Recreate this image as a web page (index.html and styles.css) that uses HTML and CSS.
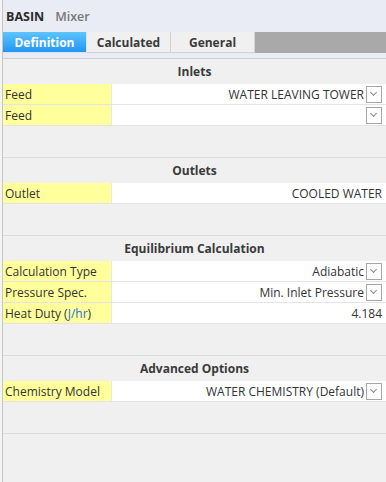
FILE: index.html
```html
<!DOCTYPE html>
<html lang="en">
<head>
    <meta charset="UTF-8">
    <meta name="viewport" content="width=device-width, initial-scale=1.0">
    <title>BASIN Mixer</title>
    <link rel="stylesheet" href="styles.css">
</head>
<body>
<div class="panel">
    <div class="title"><b>BASIN</b><span class="kind">Mixer</span></div>
    <div class="tabs">
        <div class="tab active">Definition</div>
        <div class="tab">Calculated</div>
        <div class="tab">General</div>
        <div class="tab-fill"></div>
    </div>
    <div class="tab-rule"></div>

    <div class="group">
        <div class="group-head">Inlets</div>
        <div class="row">
            <div class="label">Feed</div>
            <div class="value">WATER LEAVING TOWER<span class="drop"></span></div>
        </div>
        <div class="row">
            <div class="label">Feed</div>
            <div class="value"><span class="drop"></span></div>
        </div>
    </div>

    <div class="group">
        <div class="group-head">Outlets</div>
        <div class="row">
            <div class="label">Outlet</div>
            <div class="value">COOLED WATER</div>
        </div>
    </div>

    <div class="group">
        <div class="group-head">Equilibrium Calculation</div>
        <div class="row">
            <div class="label">Calculation Type</div>
            <div class="value">Adiabatic<span class="drop"></span></div>
        </div>
        <div class="row">
            <div class="label">Pressure Spec.</div>
            <div class="value">Min. Inlet Pressure<span class="drop"></span></div>
        </div>
        <div class="row">
            <div class="label">Heat Duty (<span class="unit">J/hr</span>)</div>
            <div class="value">4.184</div>
        </div>
    </div>

    <div class="group">
        <div class="group-head">Advanced Options</div>
        <div class="row">
            <div class="label">Chemistry Model</div>
            <div class="value">WATER CHEMISTRY (Default)<span class="drop"></span></div>
        </div>
    </div>

    <div class="group last"></div>
</div>
</body>
</html>
```

FILE: styles.css
```css
body {
    font-family: "Open Sans", "Noto Sans", Arial, sans-serif;
    font-size: 12px;
    color: #333;
    margin: 0;
    padding: 0;
    background-color: #f4f4f4;
}

.panel {
    margin-left: 2px;
    border-left: 1px solid #c6c6c6;
    height: 482px;
    background-color: #f0f0f0;
}

.title {
    height: 32px;
    display: flex;
    align-items: center;
    padding-left: 3px;
    background-color: #e9ecf5;
    font-size: 12.5px;
}

.title b {
    color: #2b2b2b;
}

.kind {
    margin-left: 11px;
    color: #777;
    font-weight: 600;
}

.tabs {
    display: flex;
    height: 21px;
    background-color: #e9ecf5;
}

.tab {
    width: 83px;
    display: flex;
    align-items: center;
    justify-content: center;
    background-color: #f0f0f0;
    border-right: 1px solid #d2d2d2;
    border-bottom: 1px solid #d2d2d2;
    font-weight: bold;
    color: #3a3a3a;
}

.tab.active {
    background: linear-gradient(#5ec4ff, #2196f3);
    border-color: #d8e4f2;
    color: #fff;
}

.tab-fill {
    flex: 1;
    background-color: #a9a9a9;
}

.tab-rule {
    height: 5px;
    background-color: #e9ecf5;
    border-bottom: 1px solid #cfcfcf;
}

.group {
    padding-bottom: 31px;
    border-bottom: 1px solid #dcdcdc;
}

.group.last {
    border-bottom: none;
}

.group-head {
    height: 25px;
    display: flex;
    align-items: center;
    justify-content: center;
    font-weight: bold;
    color: #3a3a3a;
}

.row {
    display: flex;
    height: 20px;
    border-bottom: 1px solid #e4e4e4;
}

.label {
    width: 106px;
    padding-left: 2px;
    display: flex;
    align-items: center;
    background-color: #ffff9c;
    border-right: 1px solid #e8e8e8;
    white-space: nowrap;
}

.unit {
    color: #1f6fd6;
}

.value {
    flex: 1;
    display: flex;
    align-items: center;
    justify-content: flex-end;
    padding-right: 4px;
    background-color: #fff;
    white-space: nowrap;
}

.drop {
    width: 14px;
    height: 15px;
    margin-left: 2px;
    border: 1px solid #a6a6a6;
    background-color: #fff;
    position: relative;
}

.drop::after {
    content: "";
    position: absolute;
    left: 4px;
    top: 3px;
    width: 4px;
    height: 4px;
    border-right: 1px solid #8a8a8a;
    border-bottom: 1px solid #8a8a8a;
    transform: rotate(45deg);
}
```
